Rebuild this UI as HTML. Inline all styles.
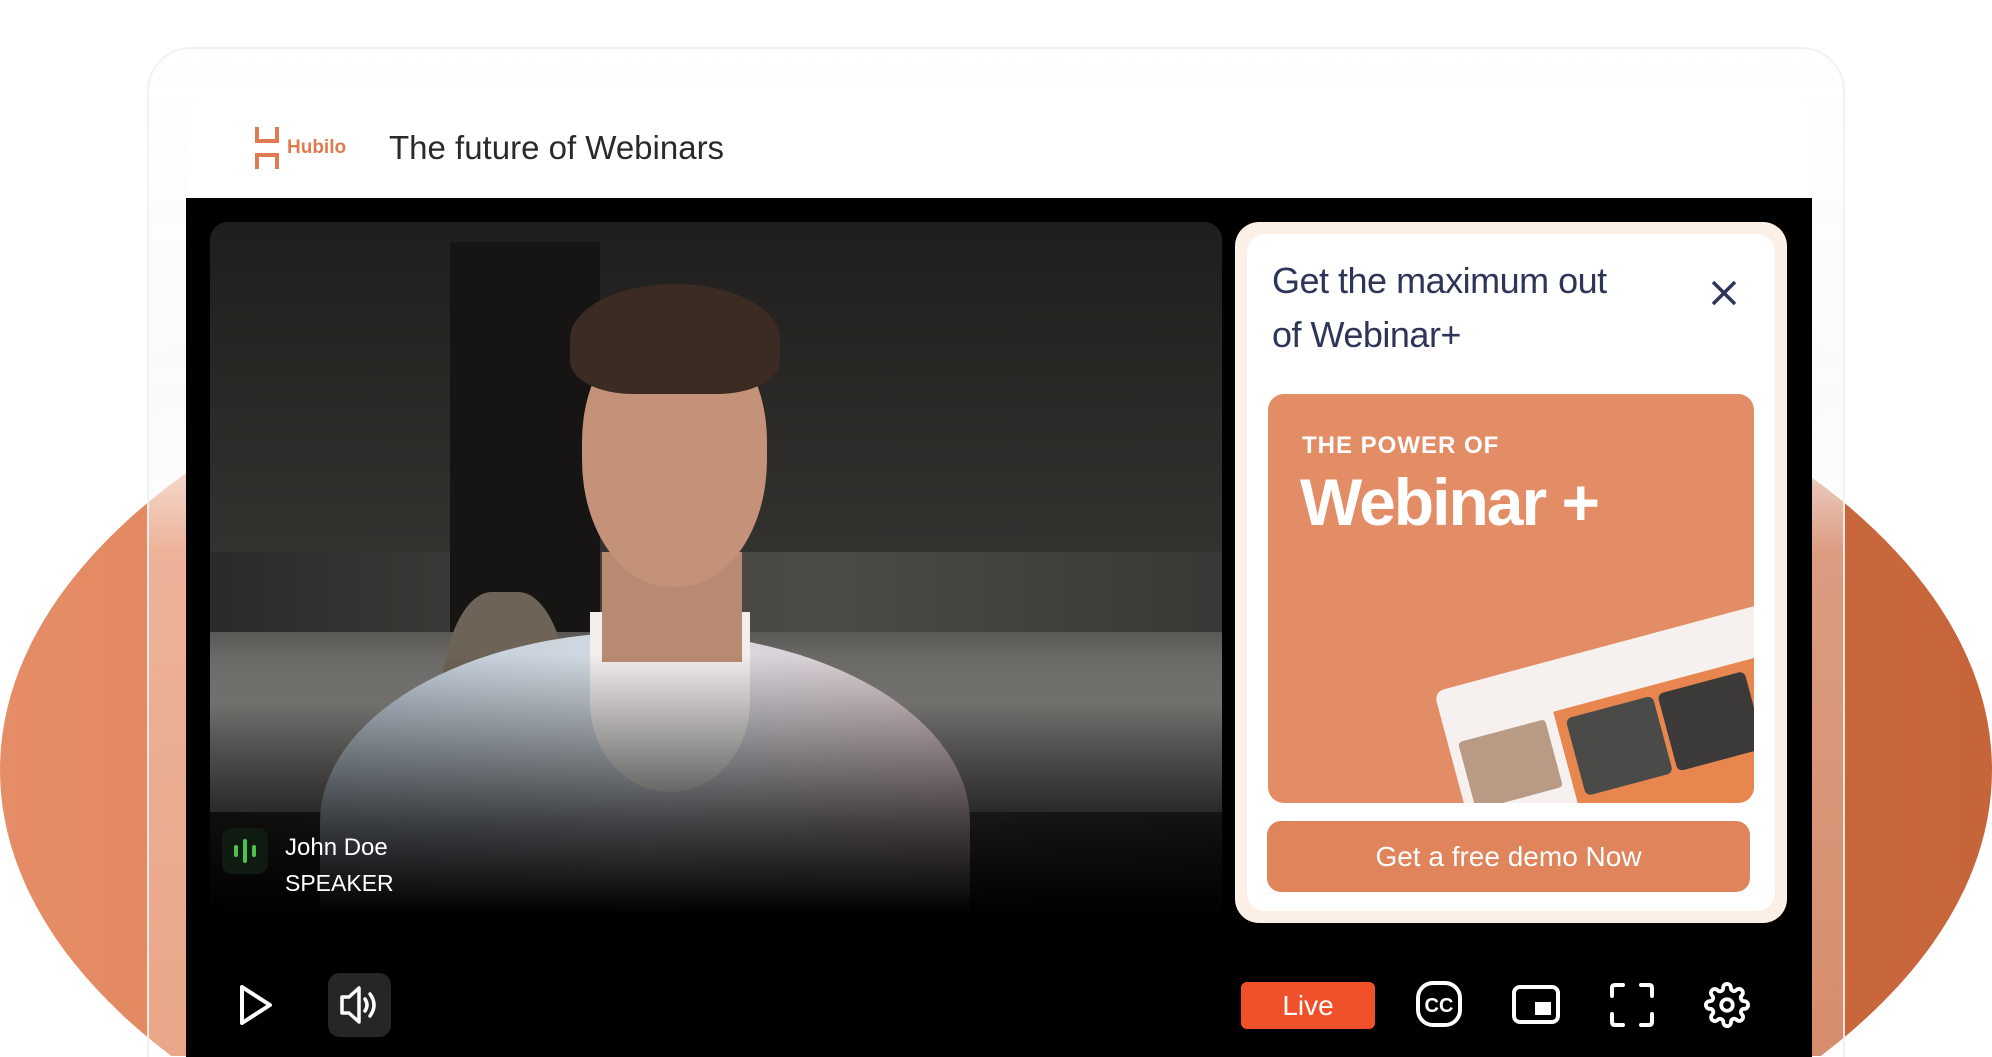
<!DOCTYPE html>
<html><head><meta charset="utf-8"><style>
*{margin:0;padding:0;box-sizing:border-box}
html,body{width:1992px;height:1057px;overflow:hidden}
body{background:#fff;font-family:"Liberation Sans",sans-serif}
#wrap{position:relative;width:1992px;height:1057px;overflow:hidden}
.blob{position:absolute;left:0;top:260px;display:block}
.glass{position:absolute;left:147px;top:47px;width:1698px;height:1010px;border-radius:44px 44px 0 0;background:linear-gradient(180deg,rgba(255,255,255,1) 0%,rgba(250,250,250,.98) 35%,rgba(255,255,255,.35) 50%,rgba(255,255,255,.25) 100%);border:2px solid rgba(240,240,240,.9);border-bottom:none}
.head{position:absolute;left:188px;top:97px;width:1622px;height:102px;background:#fff;border-radius:22px 22px 0 0}
.black{position:absolute;left:186px;top:198px;width:1626px;height:859px;background:#000}
.video{position:absolute;left:210px;top:222px;width:1012px;height:693px;border-radius:18px;overflow:hidden;background:linear-gradient(90deg,#2c2a28 0%,#3f3d3a 30%,#4d4b47 60%,#3a3835 100%)}
.card{position:absolute;left:1235px;top:222px;width:552px;height:701px;border-radius:24px;background:#fbefe6;padding:12px}
.cardin{position:relative;width:100%;height:100%;background:#fff;border-radius:18px}
.t{color:#2e3558;font-size:36px;line-height:54px;position:absolute;left:25px;top:20px;letter-spacing:-0.5px}
.promo{position:absolute;left:21px;top:160px;width:486px;height:409px;border-radius:16px;background:#e38d66;overflow:hidden}
.btn{position:absolute;left:20px;top:587px;width:483px;height:71px;border-radius:14px;background:#e0845c;color:#fff;font-size:28px;text-align:center;line-height:71px}
.ctl{position:absolute;top:975px}
</style></head><body><div id="wrap">
<svg class="blob" width="1992" height="796" viewBox="0 0 1992 796"><defs><linearGradient id="g" x1="0" x2="1"><stop offset="0" stop-color="#e58d66"/><stop offset=".5" stop-color="#d9764b"/><stop offset="1" stop-color="#c6643a"/></linearGradient></defs><ellipse cx="996" cy="510" rx="996" ry="510" fill="url(#g)"/></svg>
<div class="glass"></div>
<div class="head">
  <svg style="position:absolute;left:66px;top:30px" width="26" height="42" viewBox="0 0 26 42"><path d="M3 0V14H23V0M3 42V28H23V42" fill="none" stroke="#e07a50" stroke-width="4"/></svg>
  <div style="position:absolute;left:99px;top:40px;color:#e07a50;font-size:19px;font-weight:bold">Hubilo</div>
  <div style="position:absolute;left:201px;top:32px;color:#2a2a2a;font-size:33px">The future of Webinars</div>
</div>
<div class="black"></div>
<div class="video">
  <div style="position:absolute;left:0;top:0;width:100%;height:330px;background:linear-gradient(180deg,#1f1e1c,#34322f)"></div>
  <div style="position:absolute;left:240px;top:20px;width:150px;height:420px;background:#161514"></div>
  <div style="position:absolute;left:0;top:410px;width:100%;height:180px;background:linear-gradient(180deg,#5a5854,#8e8c88 40%,#7a7874)"></div>
  <div style="position:absolute;left:230px;top:370px;width:130px;height:300px;background:#6d6457;border-radius:40%"></div>
  <div style="position:absolute;left:110px;top:410px;width:650px;height:283px;background:linear-gradient(90deg,#b9c6d3,#d4dbe3 50%,#e0c9cc);border-radius:325px 325px 0 0/190px 190px 0 0"></div>
  <div style="position:absolute;left:380px;top:390px;width:160px;height:180px;background:#f1eeec;border-radius:0 0 50% 50%"></div>
  <div style="position:absolute;left:392px;top:330px;width:140px;height:110px;background:#b98a72"></div>
  <div style="position:absolute;left:372px;top:100px;width:185px;height:265px;background:#c49279;border-radius:45% 45% 48% 48%"></div>
  <div style="position:absolute;left:360px;top:62px;width:210px;height:110px;background:#3c2b22;border-radius:50% 50% 30% 30%"></div>
  <div style="position:absolute;left:0;top:433px;width:100%;height:260px;background:linear-gradient(180deg,rgba(0,0,0,0),rgba(0,0,0,.7) 65%,#000)"></div>
  <div style="position:absolute;left:12px;top:606px;width:46px;height:46px;border-radius:10px;background:#0f1a10">
    <svg width="46" height="46"><g stroke="#4cc24c" stroke-width="4" stroke-linecap="round"><path d="M14 19v8M23 13v20M32 19v8"/></g></svg></div>
  <div style="position:absolute;left:75px;top:612px;color:#fff;font-size:24px">John Doe</div>
  <div style="position:absolute;left:75px;top:648px;color:#fff;font-size:23px">SPEAKER</div>
</div>
<div class="card"><div class="cardin">
  <div class="t">Get the maximum out<br>of Webinar+</div>
  <svg style="position:absolute;left:463px;top:45px" width="28" height="28"><path d="M3 3L25 25M25 3L3 25" stroke="#2e3558" stroke-width="3.5"/></svg>
  <div class="promo">
    <svg style="position:absolute;left:0;top:0" width="486" height="409" viewBox="0 0 486 409">
      <g transform="rotate(-15 360 365)">
        <rect x="190" y="250" width="340" height="230" rx="10" fill="#f6f1ee"/>
        <rect x="300" y="300" width="230" height="180" fill="#e8864f"/>
        <rect x="310" y="310" width="90" height="80" rx="6" fill="#4a4a48"/>
        <rect x="405" y="310" width="90" height="80" rx="6" fill="#3b3a39"/>
        <rect x="200" y="305" width="90" height="70" rx="4" fill="#b89a85"/>
      </g>
    </svg>
    <div style="position:absolute;left:34px;top:38px;color:#fff;font-size:24px;font-weight:bold;letter-spacing:1px">THE POWER OF</div>
    <div style="position:absolute;left:32px;top:70px;color:#fff;font-size:66px;font-weight:bold;letter-spacing:-2px">Webinar +</div>
  </div>
  <div class="btn">Get a free demo Now</div>
</div></div>
<svg class="ctl" style="left:238px" width="36" height="60" viewBox="0 0 36 60"><path d="M4 12L32 30L4 48Z" fill="none" stroke="#fff" stroke-width="4" stroke-linejoin="round"/></svg>
<div style="position:absolute;left:328px;top:973px;width:63px;height:64px;border-radius:12px;background:#262626"></div>
<svg class="ctl" style="left:338px" width="44" height="60" viewBox="0 0 44 60"><path d="M4 22h7l10-9v34l-10-9H4z" fill="none" stroke="#fff" stroke-width="3.5" stroke-linejoin="round"/><path d="M27 24q4 6 0 12M32 19q8 11 0 22" fill="none" stroke="#fff" stroke-width="3.5" stroke-linecap="round"/></svg>
<div style="position:absolute;left:1241px;top:982px;width:134px;height:47px;border-radius:6px;background:#f0502a;color:#fff;font-size:28px;text-align:center;line-height:47px">Live</div>
<svg class="ctl" style="left:1415px;top:980px" width="48" height="48" viewBox="0 0 48 48"><rect x="3" y="3" width="42" height="42" rx="15" fill="none" stroke="#fff" stroke-width="4"/><text x="24" y="32" fill="#fff" font-size="20" font-weight="bold" text-anchor="middle" font-family="Liberation Sans">CC</text></svg>
<svg class="ctl" style="left:1511px;top:983px" width="50" height="44" viewBox="0 0 50 44"><rect x="3" y="4" width="44" height="35" rx="6" fill="none" stroke="#fff" stroke-width="4"/><rect x="24" y="19" width="16" height="13" fill="#fff"/></svg>
<svg class="ctl" style="left:1609px;top:982px" width="46" height="46" viewBox="0 0 46 46" fill="none" stroke="#fff" stroke-width="4" stroke-linecap="round"><path d="M3 14V6q0-3 3-3h8M32 3h8q3 0 3 3v8M43 32v8q0 3-3 3h-8M14 43H6q-3 0-3-3v-8"/></svg>
<svg class="ctl" style="left:1704px;top:982px" width="46" height="46" viewBox="0 0 24 24" fill="none" stroke="#fff" stroke-width="2"><circle cx="12" cy="12" r="3"/><path d="M19.4 15a1.65 1.65 0 0 0 .33 1.82l.06.06a2 2 0 1 1-2.83 2.83l-.06-.06a1.65 1.65 0 0 0-1.82-.33 1.65 1.65 0 0 0-1 1.51V21a2 2 0 0 1-4 0v-.09A1.65 1.65 0 0 0 9 19.4a1.65 1.65 0 0 0-1.82.33l-.06.06a2 2 0 1 1-2.83-2.83l.06-.06A1.65 1.65 0 0 0 4.68 15a1.65 1.65 0 0 0-1.51-1H3a2 2 0 0 1 0-4h.09A1.65 1.65 0 0 0 4.6 9a1.65 1.65 0 0 0-.33-1.82l-.06-.06a2 2 0 1 1 2.83-2.83l.06.06A1.65 1.65 0 0 0 9 4.68a1.65 1.65 0 0 0 1-1.51V3a2 2 0 0 1 4 0v.09a1.65 1.65 0 0 0 1 1.51 1.65 1.65 0 0 0 1.82-.33l.06-.06a2 2 0 1 1 2.83 2.83l-.06.06A1.65 1.65 0 0 0 19.4 9a1.65 1.65 0 0 0 1.51 1H21a2 2 0 0 1 0 4h-.09a1.65 1.65 0 0 0-1.51 1z"/></svg>
</div></body></html>
